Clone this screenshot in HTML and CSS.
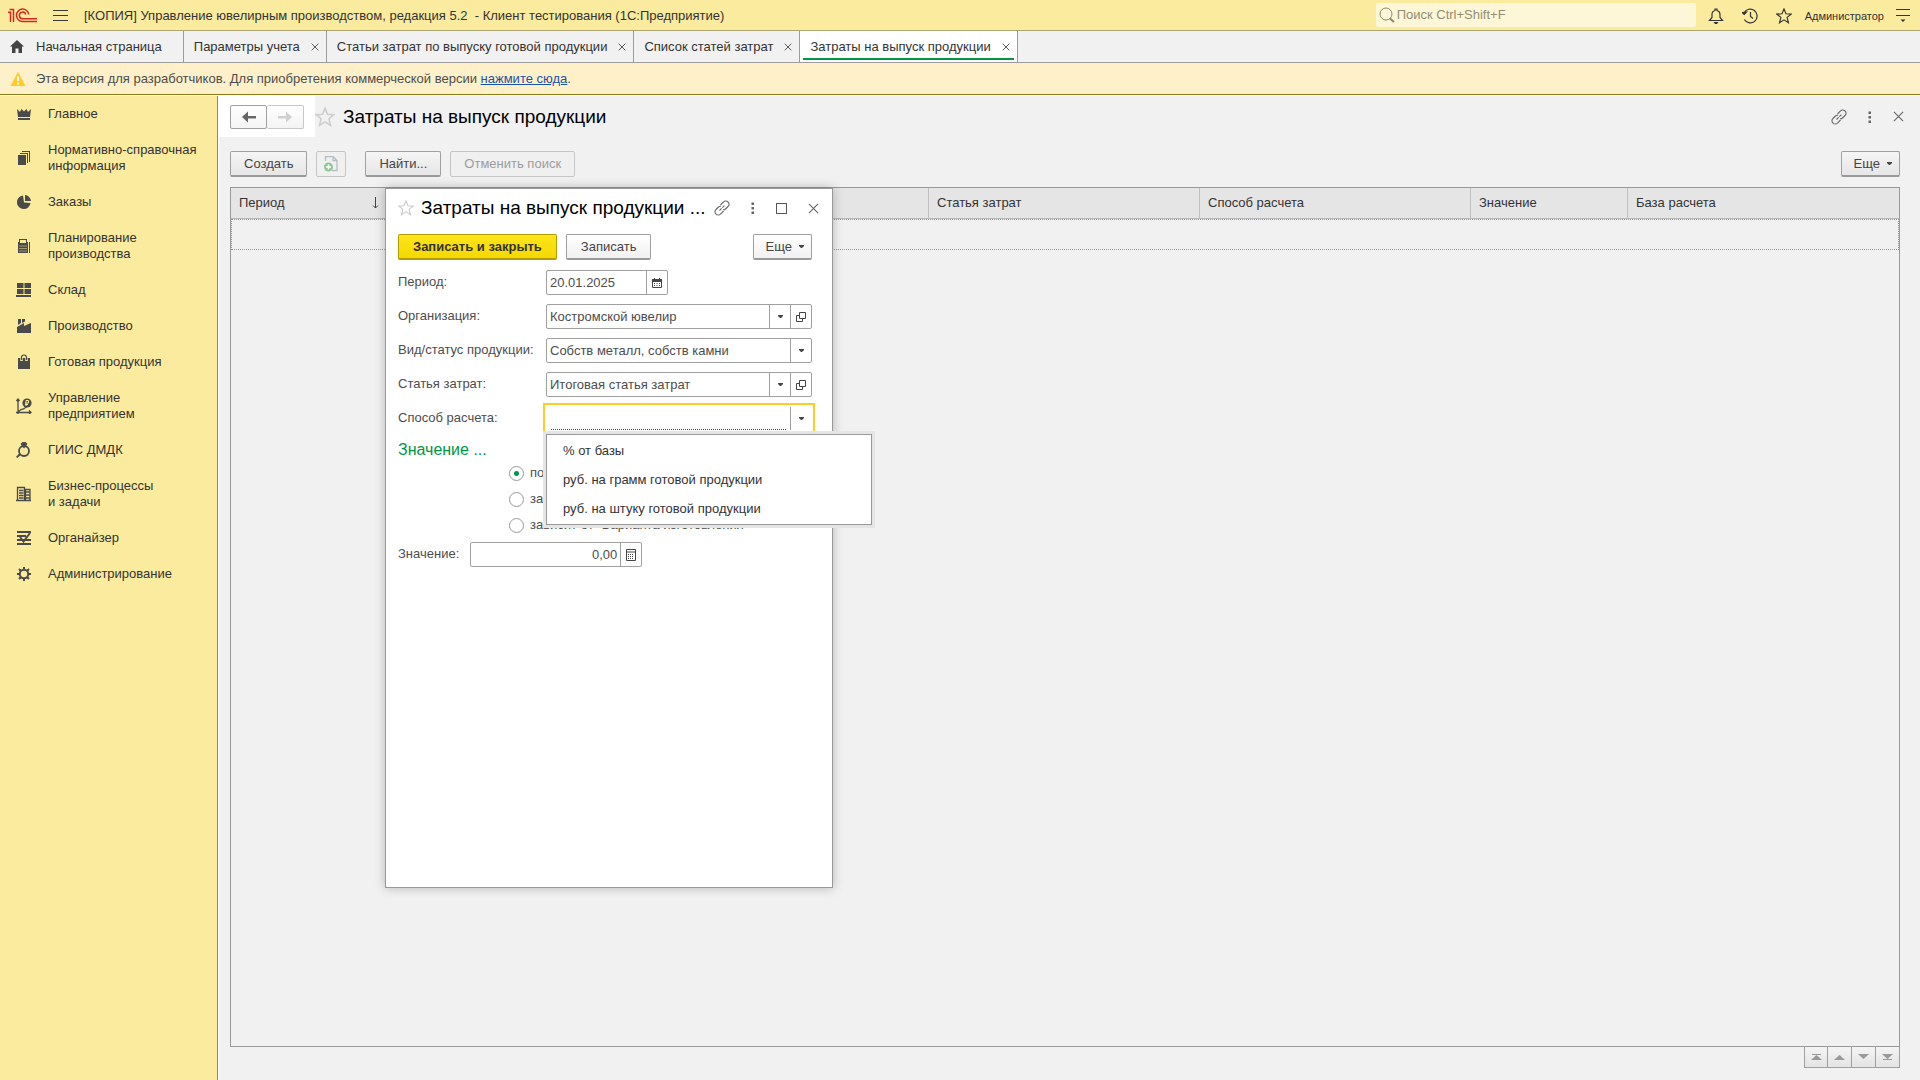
FILE: index.html
```html
<!DOCTYPE html>
<html lang="ru">
<head>
<meta charset="utf-8">
<title>Затраты на выпуск продукции</title>
<link rel="stylesheet" href="styles.css">
</head>
<body>
<svg class="sprite" aria-hidden="true">
  <symbol id="i-close" viewBox="0 0 12 12"><path d="M1 1L11 11M11 1L1 11" fill="none" stroke="currentColor" stroke-width="1.2"/></symbol>
  <symbol id="i-link" viewBox="0 0 16 16"><g fill="none" stroke="currentColor" stroke-width="1.1"><path d="M6.500 5L9.500 2A2.900 2.900 0 0 1 14 2A2.900 2.900 0 0 1 14 6.500L11.500 9A3 3 0 0 1 9 9.700"/><path d="M9.500 11L6.500 14A2.900 2.900 0 0 1 2 14A2.900 2.900 0 0 1 2 9.500L4.500 7A3 3 0 0 1 7 6.300"/><path d="M5.500 10.500L10.500 5.500" stroke-dasharray="3 1"/></g></symbol>
  <symbol id="i-dots" viewBox="0 0 4 12"><path d="M.5 .5h2.500v2.500h-2.500zM.5 5h2.500v2.500h-2.500zM.5 9.500h2.500v2.500h-2.500z" fill="currentColor"/></symbol>
  <symbol id="i-star" viewBox="0 0 18 18"><path d="M9 1L11.200 6.500L17 6.900L12.500 10.600L14 16.500L9 13.300L4 16.500L5.500 10.600L1 6.900L6.800 6.500Z" fill="none" stroke="currentColor" stroke-width="1.300"/></symbol>
  <symbol id="i-caret" viewBox="0 0 5 3"><path d="M0 0h5v1L3 3h-1L0 1z" fill="currentColor"/></symbol>
  <symbol id="i-open" viewBox="0 0 10 10"><path d="M3.500 .5h6v6h-6zM3.500 3.500h-3v6h6v-3" fill="none" stroke="currentColor"/></symbol>
</svg>

<header class="titlebar">
  <svg class="logo" viewBox="0 0 30 15" fill="none" stroke="#d9251c" stroke-width="1.500"><path d="M0 4.200H2.500V14M1.500 1.500H5.500V14M20.800 6.500A6.200 6.200 0 1 0 14.500 13.500H29M17.800 6.500A3.300 3.300 0 1 0 14.500 10.700H29"/></svg>
  <button class="plain menu" aria-label="Меню"><svg width="15" height="12" viewBox="0 0 15 12"><path d="M0 .5h15M0 5.500h15M0 10.500h15" stroke="#3a3a3a"/></svg></button>
  <h1 class="app-title">[КОПИЯ] Управление ювелирным производством, редакция 5.2 &nbsp;- Клиент тестирования (1С:Предприятие)</h1>
  <label class="search">
    <svg width="16" height="16" viewBox="0 0 16 16" fill="none" stroke="#8e8a6c"><circle cx="7" cy="7" r="6"/><path d="M11 11.500L15 15" stroke-width="2"/></svg>
    <input type="text" placeholder="Поиск Ctrl+Shift+F" aria-label="Поиск">
  </label>
  <nav class="title-tools">
    <button class="plain" aria-label="Уведомления"><svg width="16" height="16" viewBox="0 0 16 16"><path d="M1.500 12.500L4 9.500V6.500A4 4 0 0 1 7 2.500V1H9V2.500A4 4 0 0 1 12 6.500V9.500L14.500 12.500Z" fill="none" stroke="#333" stroke-width="1.200"/><path d="M5.500 14h5L9 16H7z" fill="#333"/></svg></button>
    <button class="plain" aria-label="История"><svg width="16" height="16" viewBox="0 0 16 16" fill="none" stroke="#333" stroke-width="1.200"><path d="M2 5A6.900 6.900 0 1 1 2.300 11.500"/><path d="M8.500 4V8.500L11 10.500"/><path d="M0 4.500L2.200 6.500L4.500 4Z" fill="#333"/></svg></button>
    <button class="plain" aria-label="Избранное"><svg width="16" height="16"><use href="#i-star"/></svg></button>
  </nav>
  <a class="user" href="#user">Администратор</a>
  <button class="plain service" aria-label="Сервис"><svg width="14" height="13" viewBox="0 0 14 13"><path d="M0 .5h14M0 6.500h14" stroke="#333"/><path d="M4.500 10.500h5L7 13z" fill="#333"/></svg></button>
</header>

<nav class="tabs">
  <a class="tab home" href="#home"><svg width="14" height="13" viewBox="0 0 14 13"><path d="M7 0L14 6.500H12V13H8.500V8.500H5.500V13H2V6.500H0Z" fill="#444"/></svg>Начальная страница</a>
  <div class="tab"><a href="#t1">Параметры учета</a><button class="plain" aria-label="Закрыть"><svg width="8" height="8"><use href="#i-close"/></svg></button></div>
  <div class="tab"><a href="#t2">Статьи затрат по выпуску готовой продукции</a><button class="plain" aria-label="Закрыть"><svg width="8" height="8"><use href="#i-close"/></svg></button></div>
  <div class="tab"><a href="#t3">Список статей затрат</a><button class="plain" aria-label="Закрыть"><svg width="8" height="8"><use href="#i-close"/></svg></button></div>
  <div class="tab active"><a href="#t4">Затраты на выпуск продукции</a><button class="plain" aria-label="Закрыть"><svg width="8" height="8"><use href="#i-close"/></svg></button></div>
</nav>

<div class="notice">
  <svg width="16" height="14" viewBox="0 0 16 14"><path d="M8 0L15.500 14H.5Z" fill="#fc2"/><path d="M8 4.500V9M8 10.500V12.500" stroke="#fff" stroke-width="2"/></svg>
  <p>Эта версия для разработчиков. Для приобретения коммерческой версии <a href="#buy">нажмите сюда</a>.</p>
</div>

<div class="workspace">
  <nav class="sidebar">
    <a href="#s1"><svg viewBox="0 0 16 16"><path d="M1 3L4 6L5.500 3L8 5.500L10.500 3L12 6L15 3L14 11H2ZM2 12h12v2H2z"/></svg><span>Главное</span></a>
    <a href="#s2"><svg viewBox="0 0 16 16"><path d="M2 5h8v10H2zM4 3h8v10h-1V4H4zM6 1h8v11h-1V2H6z"/></svg><span>Нормативно-справочная<br>информация</span></a>
    <a href="#s3"><svg viewBox="0 0 16 16"><path d="M7 1.500A6.800 6.800 0 1 0 14.500 9L8 8.500ZM9 1A6.500 6.500 0 0 1 15 7H9Z"/></svg><span>Заказы</span></a>
    <a href="#s4"><svg viewBox="0 0 16 16"><path d="M3 1h8v3h1v11H2V4h1zM4 2v3h6V2z" fill-rule="evenodd"/><path d="M13.500 4v11" stroke="#4a4a4a"/><path d="M3.500 8h7M3.500 10.500h7M3.500 13h7" stroke="#fbeb9f" stroke-dasharray="1 1"/></svg><span>Планирование<br>производства</span></a>
    <a href="#s5"><svg viewBox="0 0 16 16"><path d="M1 1h6.500v5H1zM8.500 1H15v5H8.500zM1 7h6.500v5H1zM8.500 7H15v5H8.500zM0 13h15v2H0z"/></svg><span>Склад</span></a>
    <a href="#s6"><svg viewBox="0 0 16 16"><path d="M1 15V9L8 5V8L15 5V15ZM2 1h3v4L2 7ZM6 1h3v2.500L6 5Z"/></svg><span>Производство</span></a>
    <a href="#s7"><svg viewBox="0 0 16 16"><path d="M2 4h12v11H2z"/><path d="M5.500 7V3.500A2.500 2.500 0 0 1 10.500 3.500V7" fill="none" stroke="#fbeb9f" stroke-width="2.500"/><path d="M5.500 6V3.500A2.500 2.500 0 0 1 10.500 3.500V6" fill="none" stroke="#4a4a4a" stroke-width="1.200"/></svg><span>Готовая продукция</span></a>
    <a href="#s8"><svg viewBox="0 0 16 16"><path d="M2 1V16M0 14.500H15M2.500 13.500L5 11.500L7.500 11L11 8.500M.5 3L2 1L3.500 3M13 12.500L15 14.500L13 16" fill="none" stroke="#4a4a4a" stroke-width="1.300"/><circle cx="11" cy="5" r="4.600"/><path d="M10 8V2.500H12.500V5H9M9 6.500H12" fill="none" stroke="#fbeb9f"/></svg><span>Управление<br>предприятием</span></a>
    <a href="#s9"><svg viewBox="0 0 16 16"><circle cx="8" cy="9" r="5" fill="none" stroke="#4a4a4a" stroke-width="1.800"/><path d="M4.500 2L6.500 0h3l2 2L8 6.500ZM0 15L3.500 11L5 12.500L1.500 16Z"/></svg><span>ГИИС ДМДК</span></a>
    <a href="#s10"><svg viewBox="0 0 16 16"><path d="M1.500 1.500h7v13h-7zM9.500 3.500h4.500v11h-4.500zM0 14.500h15M3 4.500h4.500M3 7h4.500M3 9.500h4.500M3 12h4.500M10 6h4M10 9h4M10 12h4" fill="none" stroke="#4a4a4a" stroke-width="1.300"/></svg><span>Бизнес-процессы<br>и задачи</span></a>
    <a href="#s11"><svg viewBox="0 0 16 16"><path d="M1 2h14M1 6h9M1 10h14M1 14h14" fill="none" stroke="#4a4a4a" stroke-width="2"/><path d="M4 7L7.500 11.500L14 3" fill="none" stroke="#4a4a4a" stroke-width="2"/></svg><span>Органайзер</span></a>
    <a href="#s12"><svg viewBox="0 0 16 16"><circle cx="8" cy="8" r="4.200" fill="none" stroke="#4a4a4a" stroke-width="2"/><path d="M8 1V4M8 12V15M1 8H4M12 8H15M3 3L5 5M11 11L13 13M13 3L11 5M3 13L5 11" stroke="#4a4a4a" stroke-width="2"/></svg><span>Администрирование</span></a>
  </nav>

  <main class="content">
    <div class="page-head">
      <div class="history">
        <button aria-label="Назад"><svg width="14" height="12" viewBox="0 0 14 12"><path d="M6 .5V5H14V7.500H6V11.500L0 6Z" fill="#666"/></svg></button><button aria-label="Вперед" disabled><svg width="14" height="12" viewBox="0 0 14 12"><path d="M8 .5V5H0V7.500H8V11.500L14 6Z" fill="#d0d0d0"/></svg></button>
      </div>
      <button class="plain fav" aria-label="В избранное"><svg width="20" height="20"><use href="#i-star"/></svg></button>
      <h2>Затраты на выпуск продукции</h2>
      <div class="window-tools">
        <button class="plain" aria-label="Ссылка"><svg width="16" height="16"><use href="#i-link"/></svg></button>
        <button class="plain" aria-label="Еще"><svg width="4" height="12"><use href="#i-dots"/></svg></button>
        <button class="plain" aria-label="Закрыть"><svg width="11" height="11"><use href="#i-close"/></svg></button>
      </div>
    </div>

    <div class="commands">
      <button class="btn">Создать</button>
      <button class="btn icon-btn" aria-label="Создать копированием" disabled><svg width="14" height="16" viewBox="0 0 14 16"><path d="M1.500 5V.5H9L13 4.500V14.500H8M9 .5V4.500H13" fill="none" stroke="#b4bcc4" stroke-width="1.300"/><circle cx="4.500" cy="11" r="4.500" fill="#8fc799"/><path d="M4.500 8.500v5M2 11h5" stroke="#fff" stroke-width="1.500"/></svg></button>
      <button class="btn find">Найти...</button>
      <button class="btn" disabled>Отменить поиск</button>
      <button class="btn more">Еще<svg width="5" height="3"><use href="#i-caret"/></svg></button>
    </div>

    <div class="list">
      <table>
        <colgroup><col class="c-period"><col><col class="c-item"><col class="c-item"><col class="c-value"><col class="c-item"></colgroup>
        <thead><tr>
          <th><div class="sorted">Период<svg width="7" height="12" viewBox="0 0 7 12"><path d="M3.500 0V11M1 8.500L3.500 11L6 8.500" fill="none" stroke="#444"/></svg></div></th>
          <th></th><th>Статья затрат</th><th>Способ расчета</th><th>Значение</th><th>База расчета</th>
        </tr></thead>
        <tbody><tr><td colspan="6"></td></tr></tbody>
      </table>

      <section class="dialog" role="dialog" aria-labelledby="dlg-title">
        <div class="dialog-head">
          <button class="plain fav" aria-label="В избранное"><svg width="16" height="16"><use href="#i-star"/></svg></button>
          <h2 id="dlg-title">Затраты на выпуск продукции ...</h2>
          <div class="window-tools">
            <button class="plain" aria-label="Ссылка"><svg width="16" height="16"><use href="#i-link"/></svg></button>
            <button class="plain" aria-label="Еще"><svg width="4" height="12"><use href="#i-dots"/></svg></button>
            <button class="plain" aria-label="Развернуть"><svg width="11" height="11"><rect x=".5" y=".5" width="10" height="10" fill="none" stroke="#555"/></svg></button>
            <button class="plain" aria-label="Закрыть"><svg width="11" height="11"><use href="#i-close"/></svg></button>
          </div>
        </div>
        <div class="dialog-commands">
          <button class="btn primary">Записать и закрыть</button>
          <button class="btn">Записать</button>
          <button class="btn more">Еще<svg width="5" height="3"><use href="#i-caret"/></svg></button>
        </div>
        <form class="fields">
          <label for="f-date">Период:</label>
          <div class="field date"><input id="f-date" type="text" value="20.01.2025"><button type="button" aria-label="Календарь"><svg width="10" height="10" viewBox="0 0 10 10"><path d="M.5 1.500h9v8h-9z" fill="none" stroke="#444"/><path d="M0 1h10v3H0zM2 0h1v2H2zM7 0h1v2H7zM2 5h1v1H2zM4.500 5h1v1h-1zM7 5h1v1H7zM2 7h1v1H2zM4.500 7h1v1h-1zM7 7h1v1H7z" fill="#444"/></svg></button></div>

          <label for="f-org">Организация:</label>
          <div class="field"><input id="f-org" type="text" value="Костромской ювелир"><button type="button" aria-label="Выбрать"><svg width="5" height="3"><use href="#i-caret"/></svg></button><button type="button" aria-label="Открыть"><svg width="10" height="10"><use href="#i-open"/></svg></button></div>

          <label for="f-kind">Вид/статус продукции:</label>
          <div class="field"><select id="f-kind"><option>Собств металл, собств камни</option></select><button type="button" aria-label="Выбрать"><svg width="5" height="3"><use href="#i-caret"/></svg></button></div>

          <label for="f-item">Статья затрат:</label>
          <div class="field"><input id="f-item" type="text" value="Итоговая статья затрат"><button type="button" aria-label="Выбрать"><svg width="5" height="3"><use href="#i-caret"/></svg></button><button type="button" aria-label="Открыть"><svg width="10" height="10"><use href="#i-open"/></svg></button></div>

          <label for="f-method">Способ расчета:</label>
          <div class="combo">
            <div class="field focused"><input id="f-method" type="text" role="combobox" aria-expanded="true" aria-controls="methods"><button type="button" aria-label="Выбрать"><svg width="5" height="3"><use href="#i-caret"/></svg></button></div>
            <ul class="options" id="methods" role="listbox">
              <li role="option">% от базы</li>
              <li role="option">руб. на грамм готовой продукции</li>
              <li role="option">руб. на штуку готовой продукции</li>
            </ul>
          </div>
        </form>
        <h3>Значение ...</h3>
        <div class="radios">
          <label><input type="radio" name="mode" checked>постоянное</label>
          <label><input type="radio" name="mode">зависит</label>
          <label><input type="radio" name="mode">зависит от "Варианта изготовления"</label>
        </div>
        <div class="amount">
          <label for="f-value">Значение:</label>
          <div class="field"><input id="f-value" type="text" value="0,00"><button type="button" aria-label="Калькулятор"><svg width="10" height="12" viewBox="0 0 10 12"><path d="M.5 .5h9v11h-9zM1 3h8" fill="none" stroke="#444"/><path d="M2 5.500h6M2 7.500h6M2 9.500h6" stroke="#444" stroke-dasharray="1 1"/></svg></button></div>
        </div>
      </section>
    </div>

    <div class="pager">
      <button aria-label="В начало"><svg width="11" height="6" viewBox="0 0 11 6"><path d="M1 0h9v1H1zM5.500 1L11 6H0z"/></svg></button>
      <button aria-label="Назад"><svg width="11" height="6" viewBox="0 0 11 6"><path d="M5.500 1L11 6H0z"/></svg></button>
      <button aria-label="Далее"><svg width="11" height="6" viewBox="0 0 11 6"><path d="M5.500 5L11 0H0z"/></svg></button>
      <button aria-label="В конец"><svg width="11" height="6" viewBox="0 0 11 6"><path d="M1 5h9v1H1zM5.500 5L11 0H0z"/></svg></button>
    </div>
  </main>
</div>
</body>
</html>
```

FILE: styles.css
```css
* { box-sizing: border-box; }

body {
  margin: 0;
  min-height: 100vh;
  display: flex;
  flex-direction: column;
  background: #f1f1f1;
  color: #333;
  font: 13px/16px "Liberation Sans", Arial, sans-serif;
}

h1, h2, h3, p, ul { margin: 0; padding: 0; font-weight: normal; }
ul { list-style: none; }
button, input, select { font: inherit; color: inherit; }
button { padding: 0; display: flex; align-items: center; justify-content: center; }
svg { display: block; flex: none; }
.sprite { width: 0; height: 0; position: absolute; }
.plain { border: 0; background: none; }

/* Title bar */
.titlebar {
  height: 31px;
  display: flex;
  align-items: center;
  padding: 1px 10px 0 8px;
  background: #fbeb9f;
  border-bottom: 1px solid #aca670;
}
.logo { width: 30px; height: 15px; }
.menu { margin-left: 15px; }
.app-title { flex: 1; margin-left: 16px; font-size: 13px; white-space: nowrap; }
.search {
  width: 320px;
  height: 24px;
  display: flex;
  align-items: center;
  gap: 2px;
  padding-left: 3px;
  margin-bottom: 2px;
  background: #fef7d7;
  border-radius: 2px;
}
.search input { flex: 1; border: 0; padding: 0; background: none; outline: 0; }
.search input::placeholder { color: #928e76; opacity: 1; }
.title-tools { display: flex; gap: 18px; margin: 0 13px 0 12px; }
.user { font-size: 11px; color: #333; text-decoration: none; }
.service { margin-left: 12px; }

/* Open windows */
.tabs { display: flex; height: 32px; border-bottom: 1px solid #9c9c9c; }
.tab {
  display: flex;
  align-items: center;
  gap: 11px;
  padding: 0 7px 0 10px;
  border-right: 1px solid #9c9c9c;
}
.tab, .tab a { color: #333; text-decoration: none; white-space: nowrap; }
.tab.home { gap: 12px; padding-right: 21px; }
.tab.active {
  background: linear-gradient(#009646, #009646) center bottom 2px / calc(100% - 6px) 2px no-repeat #fff;
}

.notice {
  height: 32px;
  display: flex;
  align-items: center;
  gap: 10px;
  padding-left: 10px;
  background: #fef0c8;
  border-bottom: 1px solid #967812;
  color: #4d4d4d;
}
.notice a { color: #1a53a8; }

/* Sections */
.workspace { flex: 1; display: flex; border-top: 1px solid #fff; }
.sidebar { width: 218px; flex: none; background: #fbeb9f; border-right: 1px solid #8f8861; }
.sidebar a {
  display: flex;
  align-items: center;
  gap: 16px;
  padding: 10px 0 10px 16px;
  color: #333;
  text-decoration: none;
}
.sidebar svg { width: 16px; height: 16px; fill: #4a4a4a; }

.content { flex: 1; min-width: 0; display: flex; flex-direction: column; border-left: 1px solid #fff; }
.page-head { display: flex; align-items: center; padding-right: 16px; }
.history { display: flex; padding: 9px 11px 8px; background: #fff; }
.history button {
  width: 37px;
  height: 24px;
  background: linear-gradient(#fff, #f4f4f4);
  border: 1px solid #a0a0a0;
  border-radius: 2px;
}
.history button + button { border-color: #c8c8c8; border-left: 0; }
.fav { color: #ccc; }
h2 { font-size: 19px; line-height: 22px; color: #000; }
.page-head h2 { margin-left: 8px; }
.window-tools { display: flex; align-items: center; gap: 21px; margin-left: auto; color: #666; }

.commands { display: flex; padding: 14px 20px 10px 11px; gap: 9px; }
.btn {
  height: 26px;
  padding: 0 13px;
  background: linear-gradient(#f5f5f5, #e6e6e6);
  border: 1px solid #a0a0a0;
  border-bottom: 2px solid #999;
  border-radius: 2px;
  color: #444;
  white-space: nowrap;
}
.btn:disabled { background: #f0f0f0; border: 1px solid #c6c6c6; color: #9c9c9c; }
.icon-btn { width: 30px; padding: 0; }
.find { margin-left: 10px; }

/* Register list */
.list { flex: 1; position: relative; margin: 0 20px 0 11px; border: 1px solid #999; }
table { width: 100%; table-layout: fixed; border-collapse: separate; border-spacing: 0; }
.c-period { width: 155px; }
.c-item { width: 271px; }
.c-value { width: 157px; }
th {
  height: 31px;
  padding: 0 8px;
  text-align: left;
  font-weight: normal;
  background: #e5e5e5;
  border-right: 1px solid #c0c0c0;
  border-bottom: 1px solid #b8b8b8;
}
th:last-child { border-right: 0; }
.sorted { display: flex; justify-content: space-between; align-items: center; margin-right: -2px; }
td { height: 31px; border: 1px dotted #999; }

.pager { display: flex; justify-content: flex-end; padding: 0 20px 12px 0; }
.pager button {
  width: 24px;
  height: 21px;
  background: linear-gradient(#f4f4f4, #e4e4e4);
  border: 1px solid #a0a0a0;
  border-top: 0;
}
.pager button + button { border-left: 0; }
.pager svg { fill: #999; }

/* Record window floating over the list */
.dialog {
  position: absolute;
  left: 154px;
  top: 0;
  width: 448px;
  height: 700px;
  padding: 0 12px;
  background: #fff;
  border: 1px solid #999;
  box-shadow: 0 0 10px rgba(0, 0, 0, .25);
  color: #4d4d4d;
}
.dialog-head { display: flex; align-items: center; height: 38px; }
.dialog-head h2 { margin-left: 7px; white-space: nowrap; }
.dialog-head .window-tools { padding-right: 1px; }
.dialog .btn { padding: 0 14px; background: linear-gradient(#fff, #f1f1f1); }
.dialog .primary {
  background: linear-gradient(#ffe51a, #f5d800);
  border-color: #b39b00;
  color: #333;
  font-weight: bold;
}
.commands .more, .dialog .more { margin-left: auto; padding: 0 7px 0 12px; gap: 7px; }
.dialog-commands { display: flex; gap: 9px; padding: 7px 8px 10px 0; }
.fields {
  display: grid;
  grid-template-columns: 139px 1fr;
  column-gap: 9px;
  row-gap: 9px;
  padding-right: 8px;
}
.fields > label { line-height: 24px; white-space: nowrap; }
.field {
  display: flex;
  height: 25px;
  background: #fff;
  border: 1px solid #a0a0a0;
  border-radius: 2px;
}
.field input, .field select {
  flex: 1;
  min-width: 0;
  border: 0;
  padding: 0 3px;
  background: none;
  outline: 0;
  appearance: none;
}
.field button { width: 21px; border: 0; border-left: 1px solid #a0a0a0; background: none; color: #444; }
.date { width: 122px; }
.combo { position: relative; }
.focused { border-color: transparent; outline: 2px solid #fc2; outline-offset: 1px; border-radius: 0; }
.focused input { margin: 0 4px; border-bottom: 1px dotted #f00; }
.options {
  position: absolute;
  top: 28px;
  left: 0;
  width: 326px;
  padding: 1px 0;
  background: #fff;
  border: 1px solid #999;
  box-shadow: 0 0 0 3px #e5e5e5;
  color: #333;
}
.options li { padding: 7px 16px 6px; line-height: 16px; }

h3 { font-size: 16px; line-height: 20px; margin-top: 9px; color: #009646; }
.radios { display: flex; flex-direction: column; gap: 10px; margin: 5px 0 0 111px; }
.radios label { display: flex; align-items: center; gap: 6px; height: 16px; white-space: nowrap; }
.radios input {
  appearance: none;
  width: 15px;
  height: 15px;
  margin: 0;
  border: 1px solid #999;
  border-radius: 50%;
}
.radios input:checked { background: radial-gradient(circle, #009646 2px, #fff 3px); }
.amount { display: flex; gap: 11px; margin-top: 9px; }
.amount label { line-height: 24px; }
.amount .field { width: 172px; }
.amount input { text-align: right; }
```
